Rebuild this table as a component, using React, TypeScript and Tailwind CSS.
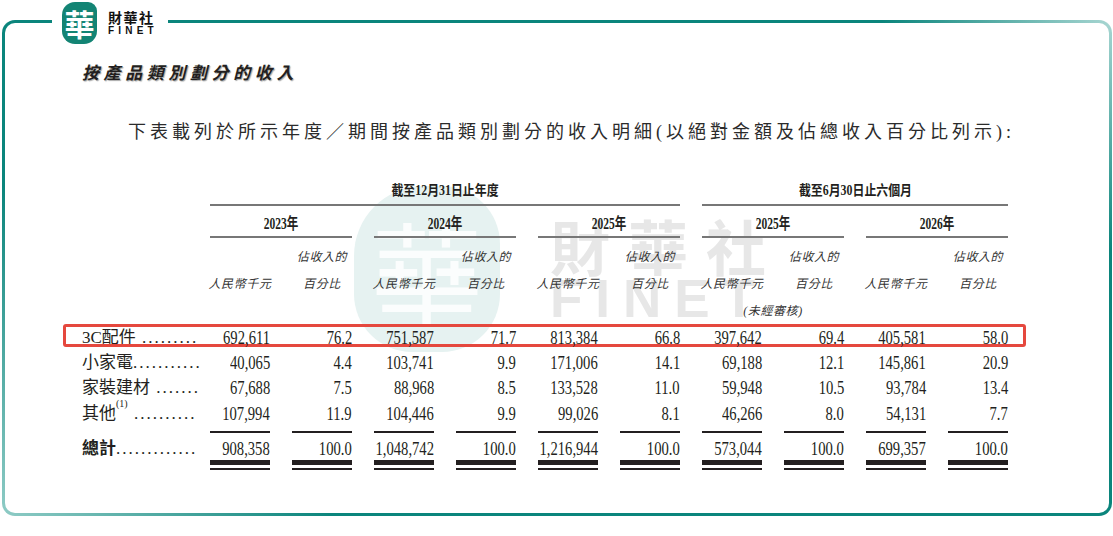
const rows = [
  {
    label: '3C配件',
    dots: ' .........',
    values: ['692,611', '76.2', '751,587', '71.7', '813,384', '66.8', '397,642', '69.4', '405,581', '58.0'],
  },
  {
    label: '小家電',
    dots: '...........',
    values: ['40,065', '4.4', '103,741', '9.9', '171,006', '14.1', '69,188', '12.1', '145,861', '20.9'],
  },
  {
    label: '家裝建材',
    dots: ' .......',
    values: ['67,688', '7.5', '88,968', '8.5', '133,528', '11.0', '59,948', '10.5', '93,784', '13.4'],
  },
  {
    label: '其他',
    sup: '(1)',
    dots: ' ..........',
    values: ['107,994', '11.9', '104,446', '9.9', '99,026', '8.1', '46,266', '8.0', '54,131', '7.7'],
  },
];

const totals = ['908,358', '100.0', '1,048,742', '100.0', '1,216,944', '100.0', '573,044', '100.0', '699,357', '100.0'];

const years = ['2023年', '2024年', '2025年', '2025年', '2026年'];

const colStart = [
  'col-start-1',
  'col-start-2',
  'col-start-3',
  'col-start-4',
  'col-start-5',
  'col-start-6',
  'col-start-7',
  'col-start-8',
  'col-start-9',
  'col-start-10',
];

function Num({ value }: { value: string }) {
  return (
    <div className="flex justify-end whitespace-nowrap">
      <span className="inline-block origin-right scale-x-[0.77] text-[19px]">{value}</span>
    </div>
  );
}

function Label({ label, sup, dots, bold }: { label: string; sup?: string; dots: string; bold?: boolean }) {
  return (
    <div className={`w-[128px] shrink-0 whitespace-nowrap text-[17px] ${bold ? 'font-bold' : ''}`}>
      {label}
      {sup && <sup className="text-[10px] align-[7px]">{sup}</sup>}
      <span className="font-normal tracking-[2px]">{dots}</span>
    </div>
  );
}

function SubHead({ text, className }: { text: string; className: string }) {
  return (
    <div className={`flex justify-center whitespace-nowrap text-[12px] italic tracking-[0.6px] leading-[27px] text-[#333] ${className}`}>
      {text}
    </div>
  );
}

function Watermark() {
  return (
    <>
      <div className="pointer-events-none absolute left-[354px] top-[186px] flex h-[166px] w-[146px] items-center justify-center rounded-[58px] rounded-tl-[70px] bg-[#e6f2f1]">
        <span className="font-['Noto_Sans_CJK_TC',sans-serif] text-[112px] leading-none text-[#fbfdfd]">華</span>
      </div>
      <div className="pointer-events-none absolute left-[550px] top-[212px] text-[#e7e7e7]">
        <div className="font-['Noto_Sans_CJK_TC',sans-serif] text-[60px] font-bold leading-[66px] tracking-[18px]">財華社</div>
        <div className="font-['Liberation_Sans',sans-serif] text-[53px] font-bold leading-[42px] tracking-[13px]">FINET</div>
      </div>
    </>
  );
}

function Logo() {
  return (
    <div className="absolute left-[52px] top-0 flex h-[46px] w-[116px] bg-white">
      <div className="ml-[10px] mt-[2px] flex h-[42px] w-[35px] items-center justify-center rounded-[13px] rounded-tr-[9px] bg-[#138474]">
        <span className="font-['Noto_Sans_CJK_TC',sans-serif] text-[30px] font-bold leading-none text-white">華</span>
      </div>
      <div className="ml-[11px] mt-[10px] text-[#111]">
        <div className="font-['Noto_Sans_CJK_TC',sans-serif] text-[14px] font-bold leading-[14px] tracking-[1.5px]">財華社</div>
        <div className="mt-[2px] font-['Liberation_Sans',sans-serif] text-[10px] font-bold leading-[10px] tracking-[4.2px]">FINET</div>
      </div>
    </div>
  );
}

export default function App() {
  return (
    <div className="relative h-[536px] w-[1113px] overflow-hidden bg-white font-['Liberation_Serif','Noto_Sans_CJK_TC',serif] text-[#231f20]">
      <div className="ml-[2px] mt-[20px] h-[496px] w-[1110px] rounded-[13px] bg-[#0b857c] bg-[image:radial-gradient(circle_at_100%_0%,#a8d6d2_0px,rgba(168,214,210,0)_230px),radial-gradient(circle_at_0%_100%,#8ecbc5_0px,rgba(142,203,197,0)_330px)] p-[3px]">
        <div className="h-full rounded-[10px] bg-white pl-[77px] pt-[41px]">
          <Watermark />

          {/* Section title */}
          <h2 className="relative text-[17px] font-bold italic leading-[20px] tracking-[4.6px] [text-shadow:1px_1px_1px_rgba(0,0,0,0.35)]">
            按產品類別劃分的收入
          </h2>

          <p className="relative ml-[46px] mt-[36px] text-[18px] leading-[24px] tracking-[4px] text-[#2b2b2b]">
            下表載列於所示年度／期間按產品類別劃分的收入明細(以絕對金額及佔總收入百分比列示):
          </p>

          {/* Table */}
          <div className="relative mt-[39px] w-[926px]">
            {/* Period headers */}
            <div className="flex">
              <div className="w-[128px] shrink-0" />
              <div className="grid grid-cols-[repeat(10,60px)] gap-x-[22px] font-bold">
                <div className="col-span-6 border-b-2 border-[#777] pb-[5px] text-center text-[14px] leading-[16px]">
                  <span className="inline-block scale-x-[0.85]">截至12月31日止年度</span>
                </div>
                <div className="col-span-4 border-b-2 border-[#777] pb-[5px] text-center text-[14px] leading-[16px]">
                  <span className="inline-block scale-x-[0.85]">截至6月30日止六個月</span>
                </div>
              </div>
            </div>

            {/* Year headers */}
            <div className="flex">
              <div className="w-[128px] shrink-0" />
              <div className="grid grid-cols-[repeat(10,60px)] gap-x-[22px] font-bold">
                {years.map((y, i) => (
                  <div key={i} className="col-span-2 border-b-2 border-[#777] pb-[4px] pt-[10px] text-center text-[16px] leading-[16px]">
                    <span className="inline-block scale-x-[0.72]">{y}</span>
                  </div>
                ))}
              </div>
            </div>

            {/* Column headers */}
            <div className="flex pt-[6px]">
              <div className="w-[128px] shrink-0" />
              <div className="grid grid-cols-[repeat(10,60px)] grid-rows-[27px_27px_27px] gap-x-[22px]">
                {years.map((_, i) => (
                  <SubHead key={`a${i}`} text="人民幣千元" className={`${colStart[i * 2]} row-start-2`} />
                ))}
                {years.map((_, i) => (
                  <SubHead key={`b${i}`} text="佔收入的" className={`${colStart[i * 2 + 1]} row-start-1`} />
                ))}
                {years.map((_, i) => (
                  <SubHead key={`c${i}`} text="百分比" className={`${colStart[i * 2 + 1]} row-start-2`} />
                ))}
                <SubHead text="(未經審核)" className="col-start-7 col-span-2 row-start-3" />
              </div>
            </div>

            {/* Body rows */}
            {rows.map((r, ri) => (
              <div
                key={r.label}
                className={`relative flex ${ri < 2 ? 'leading-[25px]' : 'leading-[26px]'}`}
              >
                {ri === 0 && (
                  <div className="pointer-events-none absolute -left-[19px] -right-[18px] -top-[1px] bottom-[3px] rounded-[3px] border-[3px] border-[#e5483e]" />
                )}
                <Label label={r.label} sup={r.sup} dots={r.dots} />
                <div className="grid grid-cols-[repeat(10,60px)] gap-x-[22px]">
                  {r.values.map((v, i) => (
                    <div key={i} className={ri === 3 ? 'border-b-2 border-[#231f20] pb-[4px]' : ''}>
                      <Num value={v} />
                    </div>
                  ))}
                </div>
              </div>
            ))}

            {/* Total */}
            <div className="flex pt-[4px] leading-[23px]">
              <Label label="總計" dots="............." bold />
              <div className="grid grid-cols-[repeat(10,60px)] gap-x-[22px]">
                {totals.map((v, i) => (
                  <div key={i}>
                    <div className="border-b-[5px] border-[#231f20]">
                      <Num value={v} />
                    </div>
                    <div className="mt-[3px] h-[2px] bg-[#231f20]" />
                  </div>
                ))}
              </div>
            </div>
          </div>
        </div>
      </div>
      <Logo />
    </div>
  );
}
